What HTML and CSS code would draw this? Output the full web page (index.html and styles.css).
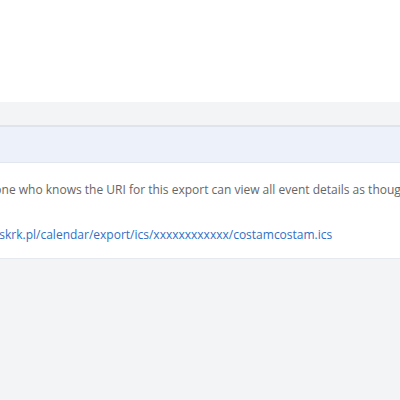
FILE: index.html
```html
<!DOCTYPE html>
<html lang="en">
<head>
  <meta charset="UTF-8">
  <title>Calendar export</title>
  <link rel="stylesheet" href="styles.css">
</head>
<body>
  <div id="top"></div>
  <div id="panel">
    <div class="panel-strip"></div>
    <div class="panel-head"></div>
    <div class="panel-body">
      <p class="note">Everyone who knows the URI for this export can view all event details as though they were a member.</p>
      <a class="export-link" href="#">https://hskrk.pl/calendar/export/ics/xxxxxxxxxxxx/costamcostam.ics</a>
    </div>
  </div>
</body>
</html>
```

FILE: styles.css
```css
html, body {
  margin: 0;
  padding: 0;
  background: #f3f4f6;
  font-family: 'Open Sans', sans-serif;
  overflow: hidden;
}
#top {
  background: #fff;
  height: 102px;
}
#panel {
  margin-left: -65px;
  width: 800px;
}
.panel-strip {
  height: 23px;
  background: #f3f4f6;
  border-bottom: 2px solid #dfe4ec;
}
.panel-head {
  height: 35px;
  background: #edf2fa;
  border-bottom: 1px solid #e3e8f0;
}
.panel-body {
  background: #fff;
  padding: 17px 16px 0 16px;
  height: 78px;
  box-shadow: 0 2px 3px rgba(200, 205, 225, 0.6);
  border-bottom: 1px solid #e6e8f0;
}
.note {
  margin: 0 0 22px 13px;
  font-size: 12px;
  line-height: 20px;
  color: #666;
  white-space: nowrap;
}
.export-link {
  font-size: 12px;
  line-height: 20px;
  color: #2f6fc6;
  text-decoration: none;
  white-space: nowrap;
}
```
